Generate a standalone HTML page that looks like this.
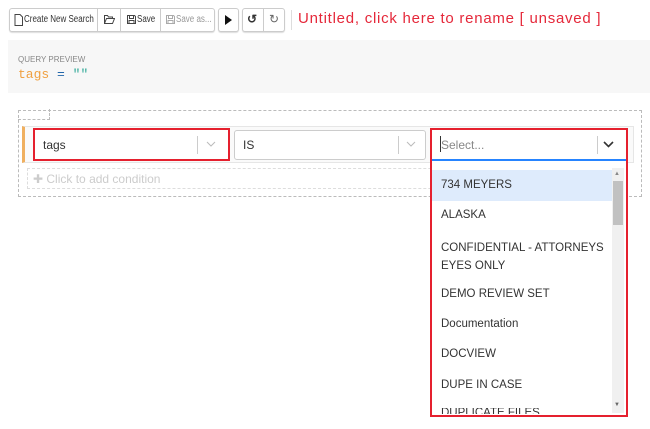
<!DOCTYPE html>
<html><head><style>
*{box-sizing:border-box;margin:0;padding:0}
body{width:650px;height:429px;overflow:hidden;background:#fff;font-family:"Liberation Sans",sans-serif;position:relative;color:#333}
.a{position:absolute;white-space:nowrap}
.grp{position:absolute;top:8px;height:24px;border:1px solid #ccc;border-radius:3px;background:#fff;box-shadow:0 1px 1px #ddd}
.tb{font-size:10px;top:14px;transform:scaleX(0.8);transform-origin:0 0}
.it{position:absolute;left:432px;width:180px;font-size:11.5px;padding-left:9px;color:#333}
</style></head><body>
<div class="grp" style="left:9px;width:206px"></div>
<svg class="a" style="left:14px;top:14px" width="9" height="12" viewBox="0 0 9 12"><path d="M1 .5h5l2.5 2.5v8.5h-7.5z" fill="none" stroke="#444"/></svg>
<div class="a tb" style="left:24px">Create New Search</div>
<div class="a" style="left:97px;top:9px;width:1px;height:22px;background:#ccc"></div>
<svg class="a" style="left:104px;top:15px" width="11" height="9" viewBox="0 0 11 9"><path d="M.5 8.5v-8h3l1 1.5h4v1.5M.5 8.5l2-5h8l-2 5z" fill="none" stroke="#444"/></svg>
<div class="a" style="left:120px;top:9px;width:1px;height:22px;background:#ccc"></div>
<svg class="a" style="left:127px;top:15px" width="9" height="9" viewBox="0 0 9 9"><path d="M.5.5h7l1 1v7h-8z M2.5.5v3h4v-3 M2 8.5v-3h5v3" fill="none" stroke="#444"/></svg>
<div class="a tb" style="left:137px">Save</div>
<div class="a" style="left:160px;top:9px;width:1px;height:22px;background:#ccc"></div>
<svg class="a" style="left:166px;top:15px" width="9" height="9" viewBox="0 0 9 9"><path d="M.5.5h7l1 1v7h-8z M2.5.5v3h4v-3 M2 8.5v-3h5v3" fill="none" stroke="#aaa"/></svg>
<div class="a tb" style="left:176px;color:#999">Save as...</div>
<div class="grp" style="left:218px;width:21px"></div>
<div class="a" style="left:225px;top:15px;width:0;height:0;border-left:7px solid #111;border-top:5px solid transparent;border-bottom:5px solid transparent"></div>
<div class="grp" style="left:242px;width:43px"></div>
<div class="a" style="left:263px;top:9px;width:1px;height:22px;background:#ccc"></div>
<div class="a" style="left:247px;top:12px;font-size:12px;font-weight:bold">↺</div>
<div class="a" style="left:269px;top:12px;font-size:12px;color:#666">↻</div>
<div class="a" style="left:291px;top:10px;width:1px;height:20px;background:#ddd"></div>
<div class="a" style="left:298px;top:10px;font-size:15px;letter-spacing:0.75px;color:#e5283a">Untitled, click here to rename [ unsaved ]</div>

<div class="a" style="left:8px;top:40px;width:642px;height:53px;background:#f7f7f7"></div>
<div class="a" style="left:18px;top:55px;font-size:8px;color:#888">QUERY PREVIEW</div>
<div class="a" style="left:18px;top:67px;font-size:13px;font-family:'Liberation Mono',monospace;color:#f0a040">tags <span style="color:#2266aa">=</span> <span style="color:#3a9">""</span></div>

<div class="a" style="left:18px;top:110px;width:624px;height:87px;border:1px dashed #bbb"></div>
<div class="a" style="left:18px;top:109px;width:32px;height:11px;border:1px dashed #bbb;border-top:none;border-left:none"></div>
<div class="a" style="left:22px;top:126px;width:612px;height:37px;border:1px solid #e6e6e6;border-left:3px solid #f0b060;background:#fafafa"></div>
<div class="a" style="left:33px;top:128px;width:197px;height:33px;border:2px solid #e5202e;background:#fff"></div>
<div class="a" style="left:43px;top:138px;font-size:12px">tags</div>
<div class="a" style="left:197px;top:136px;width:1px;height:18px;background:#ccc"></div>
<svg class="a" style="left:206px;top:141px" width="10" height="7"><path d="M1 1l4 4 4-4" fill="none" stroke="#bbb"/></svg>
<div class="a" style="left:234px;top:130px;width:192px;height:30px;border:1px solid #ccc;border-radius:3px;background:#fff"></div>
<div class="a" style="left:243px;top:138px;font-size:12px">IS</div>
<div class="a" style="left:398px;top:136px;width:1px;height:18px;background:#ccc"></div>
<svg class="a" style="left:406px;top:141px" width="10" height="7"><path d="M1 1l4 4 4-4" fill="none" stroke="#bbb"/></svg>
<div class="a" style="left:27px;top:168px;width:600px;height:21px;border:1px dashed #ddd"></div>
<div class="a" style="left:33px;top:172px;font-size:12px;color:#ccc">✚ Click to add condition</div>

<div class="a" style="left:430px;top:128px;width:198px;height:289px;border:2px solid #e5202e;background:#fff"></div>
<div class="a" style="left:432px;top:159px;width:194px;height:2px;background:#2684ff"></div>
<div class="a" style="left:441px;top:138px;font-size:12px;color:#888">Select...</div>
<div class="a" style="left:440px;top:136px;width:1px;height:16px;background:#333"></div>
<div class="a" style="left:597px;top:136px;width:1px;height:18px;background:#ccc"></div>
<svg class="a" style="left:603px;top:141px" width="11" height="7"><path d="M1 1l4.5 4.5 4.5-4.5" fill="none" stroke="#333" stroke-width="1.6"/></svg>
<div class="a" style="left:612px;top:168px;width:12px;height:245px;background:#f0f0f0"></div>
<div class="a" style="left:613px;top:181px;width:10px;height:44px;background:#c1c1c1"></div>
<div class="a" style="left:614px;top:171px;font-size:6px;color:#888">▲</div>
<div class="a" style="left:614px;top:402px;font-size:6px;color:#666">▼</div>
<div class="it" style="top:170px;height:31px;line-height:31px;background:#deebfc">734 MEYERS</div>
<div class="it" style="top:209px">ALASKA</div>
<div class="it" style="top:239px;line-height:18px">CONFIDENTIAL - ATTORNEYS<br>EYES ONLY</div>
<div class="it" style="top:288px">DEMO REVIEW SET</div>
<div class="it" style="top:318px">Documentation</div>
<div class="it" style="top:348px">DOCVIEW</div>
<div class="it" style="top:379px">DUPE IN CASE</div>
<div class="a" style="left:432px;top:408px;width:180px;height:6px;overflow:hidden"><div style="font-size:11.5px;padding-left:9px;margin-top:-1px">DUPLICATE FILES</div></div>
</body></html>
